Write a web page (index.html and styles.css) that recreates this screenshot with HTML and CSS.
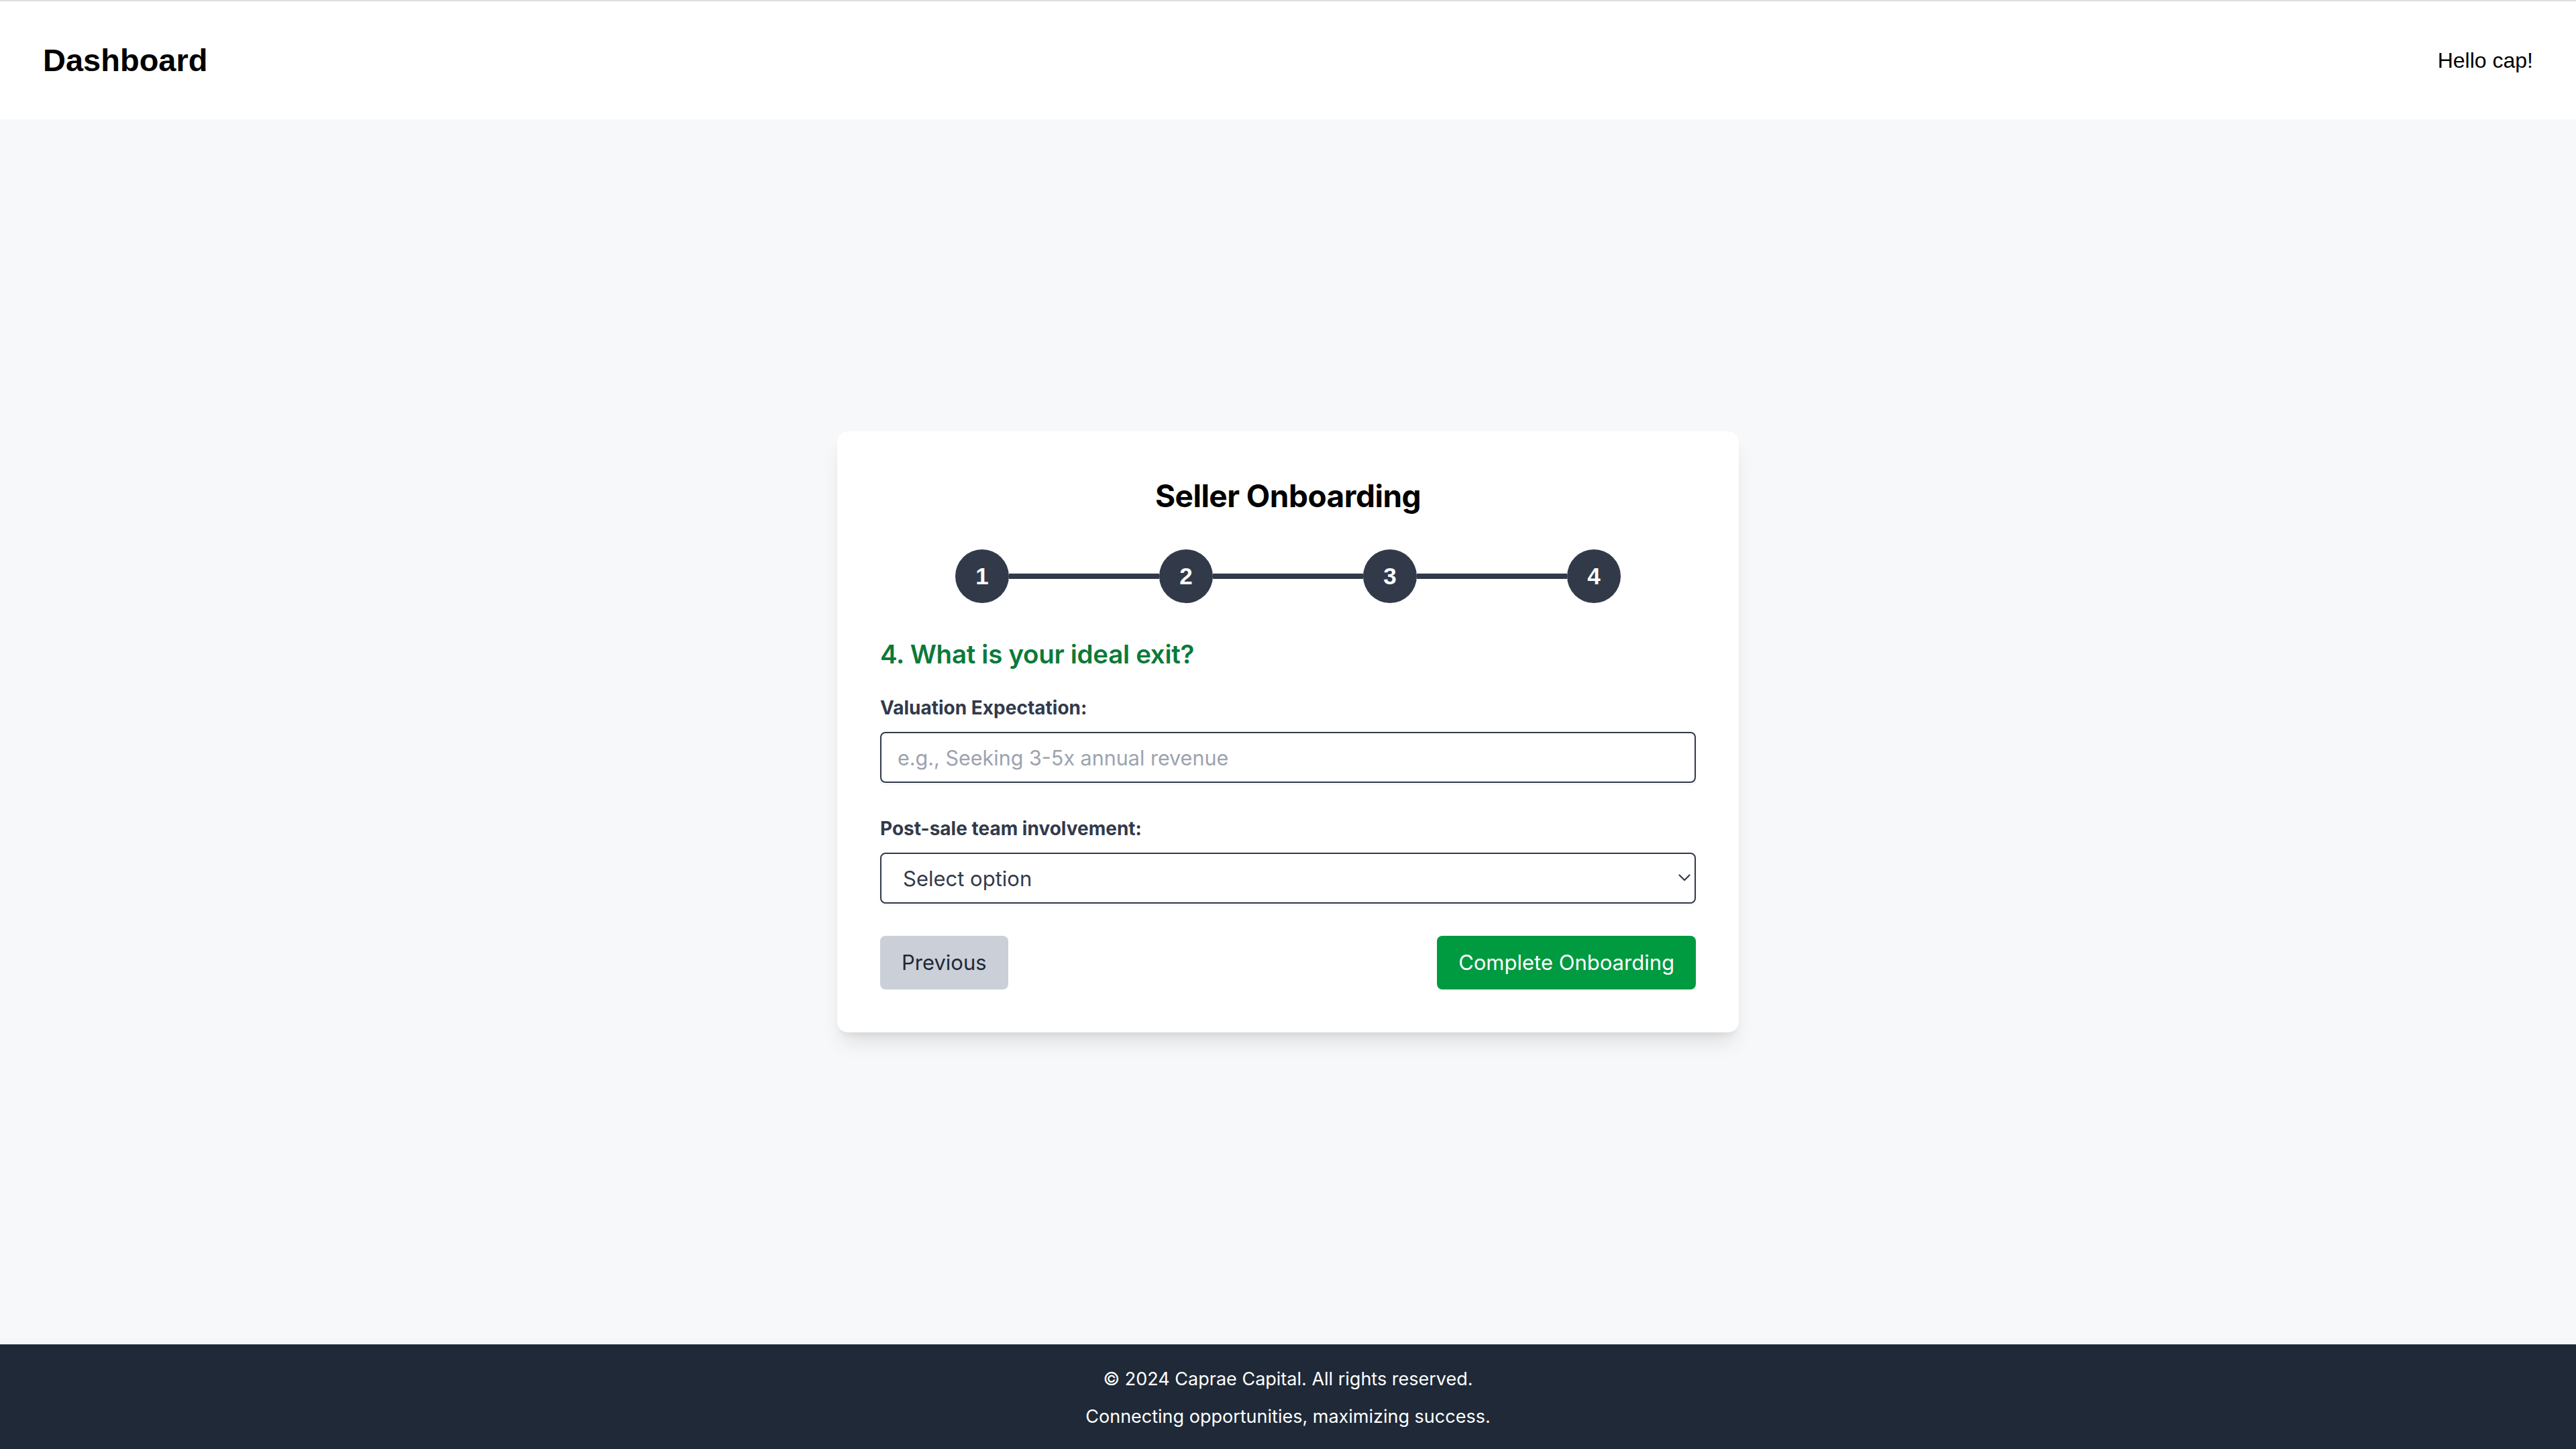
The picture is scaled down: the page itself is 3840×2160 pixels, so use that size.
FILE: index.html
```html
<!DOCTYPE html>
<html lang="en">
<head>
<meta charset="utf-8">
<title>Dashboard</title>
<link rel="stylesheet" href="styles.css">
</head>
<body>
<div class="page">
  <header class="topbar">
    <h1 class="brand">Dashboard</h1>
    <span class="greeting">Hello cap!</span>
  </header>
  <main class="main">
    <section class="card">
      <h2 class="card-title">Seller Onboarding</h2>
      <div class="stepper">
        <span class="step">1</span>
        <span class="step-line"></span>
        <span class="step">2</span>
        <span class="step-line"></span>
        <span class="step">3</span>
        <span class="step-line"></span>
        <span class="step">4</span>
      </div>
      <h3 class="question">4. What is your ideal exit?</h3>
      <div class="field">
        <label class="label" for="valuation">Valuation Expectation:</label>
        <input id="valuation" class="input" type="text" placeholder="e.g., Seeking 3-5x annual revenue">
      </div>
      <div class="field">
        <label class="label" for="involvement">Post-sale team involvement:</label>
        <div class="select-wrap">
          <select id="involvement" class="select">
            <option>Select option</option>
          </select>
          <svg class="chevron" width="18" height="11" viewBox="0 0 18 11" aria-hidden="true">
            <path d="M1.5 1.5 L9 9 L16.5 1.5" fill="none" stroke="#323a4a" stroke-width="2.2" stroke-linecap="round" stroke-linejoin="round"/>
          </svg>
        </div>
      </div>
      <div class="actions">
        <button class="btn btn-prev" type="button">Previous</button>
        <button class="btn btn-complete" type="button">Complete Onboarding</button>
      </div>
    </section>
  </main>
  <footer class="footer">
    <p class="footer-line">© 2024 Caprae Capital. All rights reserved.</p>
    <p class="footer-line footer-tag">Connecting opportunities, maximizing success.</p>
  </footer>
</div>
</body>
</html>
```

FILE: styles.css
```css
* { box-sizing: border-box; }

html, body {
  margin: 0;
  padding: 0;
}

body {
  font-family: Inter, "Noto Sans", "Liberation Sans", sans-serif;
  background: #f7f8fa;
  color: #111;
}

.page {
  min-height: 2160px;
  display: flex;
  flex-direction: column;
}

.topbar {
  height: 178px;
  border-top: 2px solid #dedede;
  background: #ffffff;
  display: flex;
  align-items: center;
  justify-content: space-between;
  padding: 0 64px;
  font-family: "Liberation Sans", Arial, sans-serif;
}

.brand {
  margin: 0;
  font-size: 47px;
  font-weight: 700;
  line-height: 64px;
  color: #000;
}

.greeting {
  font-size: 32px;
  line-height: 48px;
  color: #000;
}

.main {
  flex: 1;
  display: flex;
  align-items: center;
  justify-content: center;
}

.card {
  width: 1344px;
  background: #ffffff;
  border-radius: 16px;
  padding: 64px;
  box-shadow: 0 20px 30px -6px rgba(0, 0, 0, 0.10), 0 8px 12px -6px rgba(0, 0, 0, 0.08);
}

.card-title {
  margin: 0 0 48px;
  text-align: center;
  font-size: 46px;
  line-height: 64px;
  font-weight: 700;
  letter-spacing: -0.5px;
  color: #000;
}

.stepper {
  display: flex;
  align-items: center;
  justify-content: center;
  margin-bottom: 48px;
}

.step {
  width: 80px;
  height: 80px;
  border-radius: 50%;
  background: #323a4a;
  color: #ffffff;
  display: flex;
  align-items: center;
  justify-content: center;
  font-family: "Liberation Sans", Arial, sans-serif;
  font-weight: 700;
  font-size: 35px;
}

.step-line {
  width: 224px;
  height: 8px;
  background: #323a4a;
}

.question {
  margin: 0 0 32px;
  font-size: 38.5px;
  line-height: 56px;
  font-weight: 600;
  letter-spacing: -0.3px;
  color: #0b7a3a;
}

.field {
  margin-bottom: 48px;
}

.label {
  display: block;
  margin-bottom: 16px;
  font-size: 28px;
  line-height: 40px;
  font-weight: 700;
  color: #323a4a;
}

.input,
.select {
  display: block;
  width: 100%;
  height: 76px;
  border: 2px solid #323a4a;
  border-radius: 8px;
  background: #ffffff;
  font-family: Inter, "Noto Sans", sans-serif;
  font-size: 31px;
  color: #323a4a;
  box-shadow: 0 2px 4px rgba(0, 0, 0, 0.06);
  outline: none;
}

.input {
  padding: 0 24px;
  font-size: 30.5px;
}

.input::placeholder {
  color: #9ca3af;
}

.select-wrap {
  position: relative;
}

.select {
  appearance: none;
  -webkit-appearance: none;
  padding: 0 32px;
}

.chevron {
  position: absolute;
  right: 8px;
  top: 32px;
}

.actions {
  display: flex;
  justify-content: space-between;
  align-items: center;
  margin-top: 2px;
}

.btn {
  height: 80px;
  border: none;
  border-radius: 8px;
  padding: 0 32px;
  font-family: Inter, "Noto Sans", sans-serif;
  font-size: 31px;
  line-height: 48px;
}

.btn-prev {
  background: #cbd0d8;
  color: #1f2937;
}

.btn-complete {
  background: #009a40;
  color: #ffffff;
}

.footer {
  background: #1f2937;
  color: #ffffff;
  text-align: center;
  padding: 32px 0 28px;
}

.footer-line {
  margin: 0;
  font-size: 27px;
  line-height: 40px;
}

.footer-tag {
  margin-top: 16px;
}
```
